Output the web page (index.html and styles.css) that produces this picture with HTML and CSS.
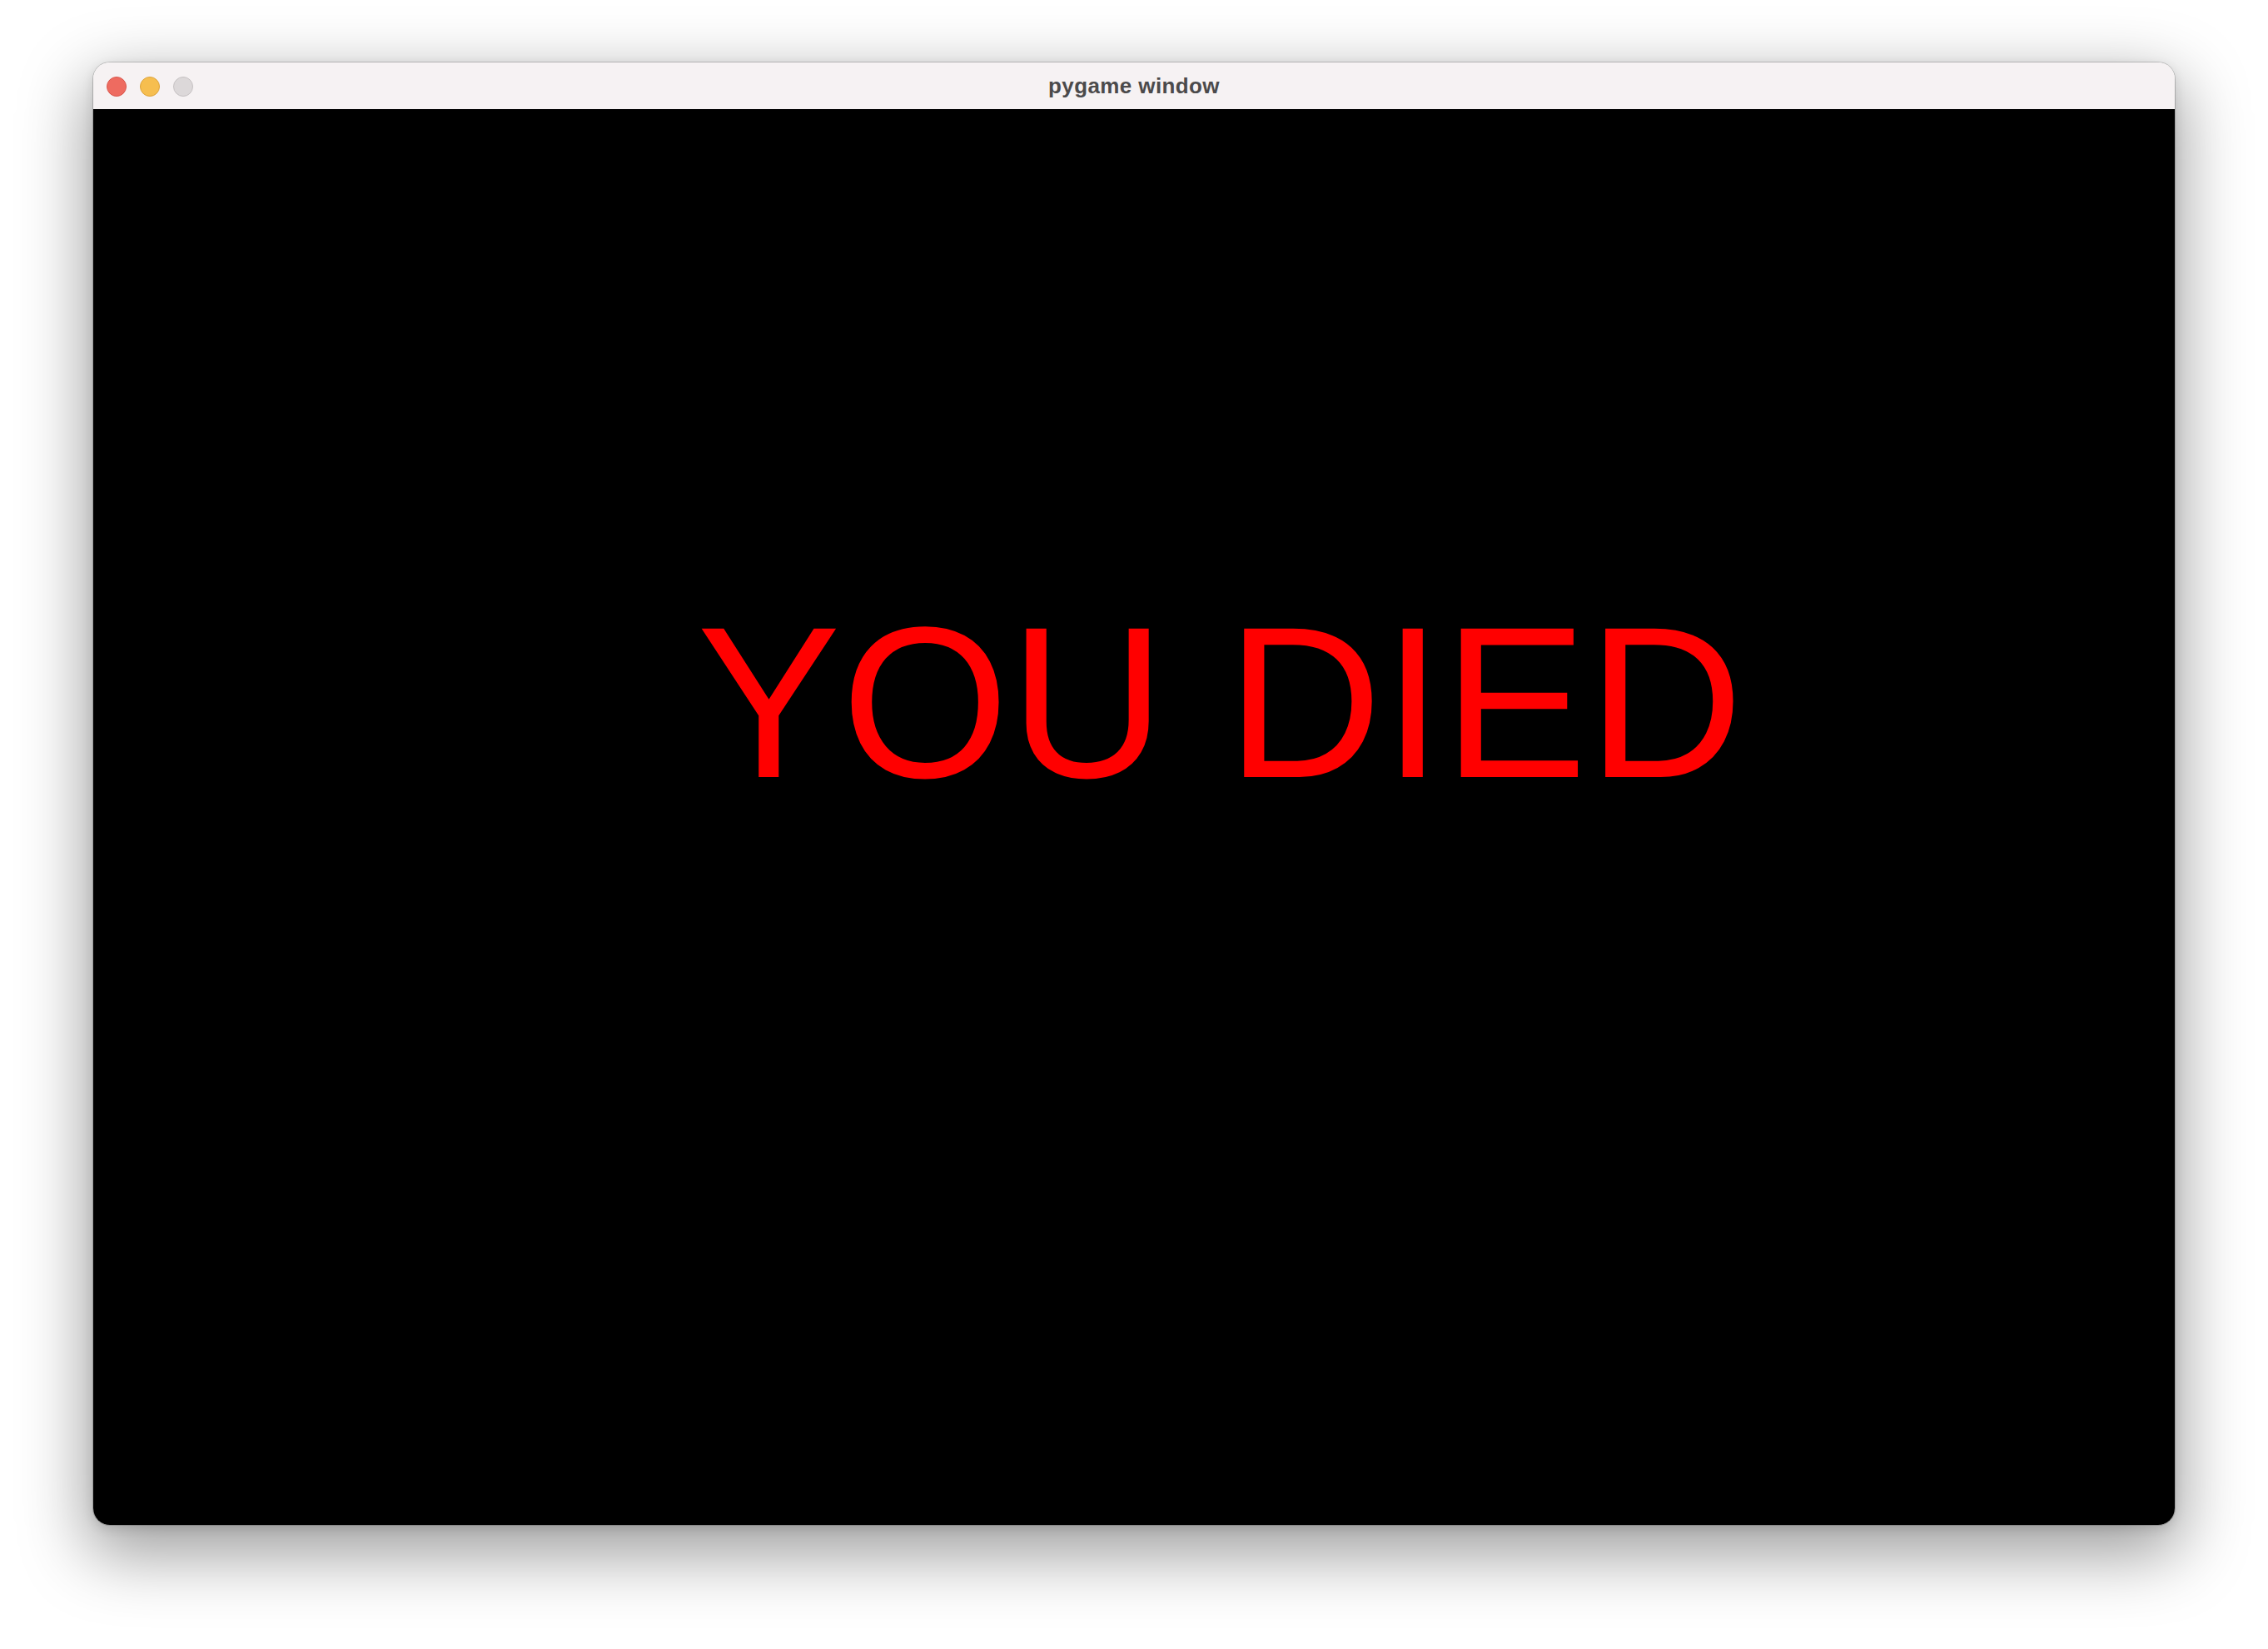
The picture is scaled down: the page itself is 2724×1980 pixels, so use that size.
FILE: index.html
```html
<!DOCTYPE html>
<html>
<head>
<meta charset="utf-8">
<title>pygame window</title>
<link rel="stylesheet" href="styles.css">
</head>
<body>
<div class="desktop">
  <div class="window">
    <div class="titlebar">
      <div class="lights">
        <span class="light close"></span>
        <span class="light min"></span>
        <span class="light zoom"></span>
      </div>
      <div class="title">pygame window</div>
    </div>
    <div class="content">
      <div class="message">YOU DIED</div>
    </div>
  </div>
</div>
</body>
</html>
```
FILE: styles.css
```css
html, body {
  margin: 0;
  padding: 0;
  background: #ffffff;
}
.desktop {
  width: 2724px;
  height: 1980px;
  padding: 75px 0 0 112px;
  box-sizing: border-box;
}
.window {
  width: 2500px;
  border-radius: 20px;
  overflow: hidden;
  box-shadow: 0 0 0 1px rgba(0,0,0,0.18), 0 28px 80px 8px rgba(0,0,0,0.38), 0 4px 14px rgba(0,0,0,0.12);
}
.titlebar {
  position: relative;
  height: 56px;
  background: #f6f2f3;
  display: flex;
  align-items: center;
  justify-content: center;
}
.lights {
  position: absolute;
  left: 16px;
  top: 17px;
  display: flex;
  gap: 16px;
}
.light {
  width: 24px;
  height: 24px;
  border-radius: 50%;
  box-sizing: border-box;
}
.close { background: #ee6b60; border: 1px solid #d9584e; }
.min { background: #f6be4f; border: 1px solid #dca33c; }
.zoom { background: #dcd8d9; border: 1px solid #c5c1c2; }
.title {
  font-family: "Liberation Sans", Arial, sans-serif;
  font-weight: 700;
  font-size: 26px;
  letter-spacing: 0.4px;
  color: #4b4a4b;
  margin-top: 1px;
}
.content {
  height: 1700px;
  background: #000000;
  padding: 583px 0 0 725px;
  box-sizing: border-box;
}
.message {
  font-family: "Liberation Sans", Arial, sans-serif;
  font-size: 259px;
  letter-spacing: 0.7px;
  line-height: 1;
  color: #ff0000;
  white-space: nowrap;
}
```
